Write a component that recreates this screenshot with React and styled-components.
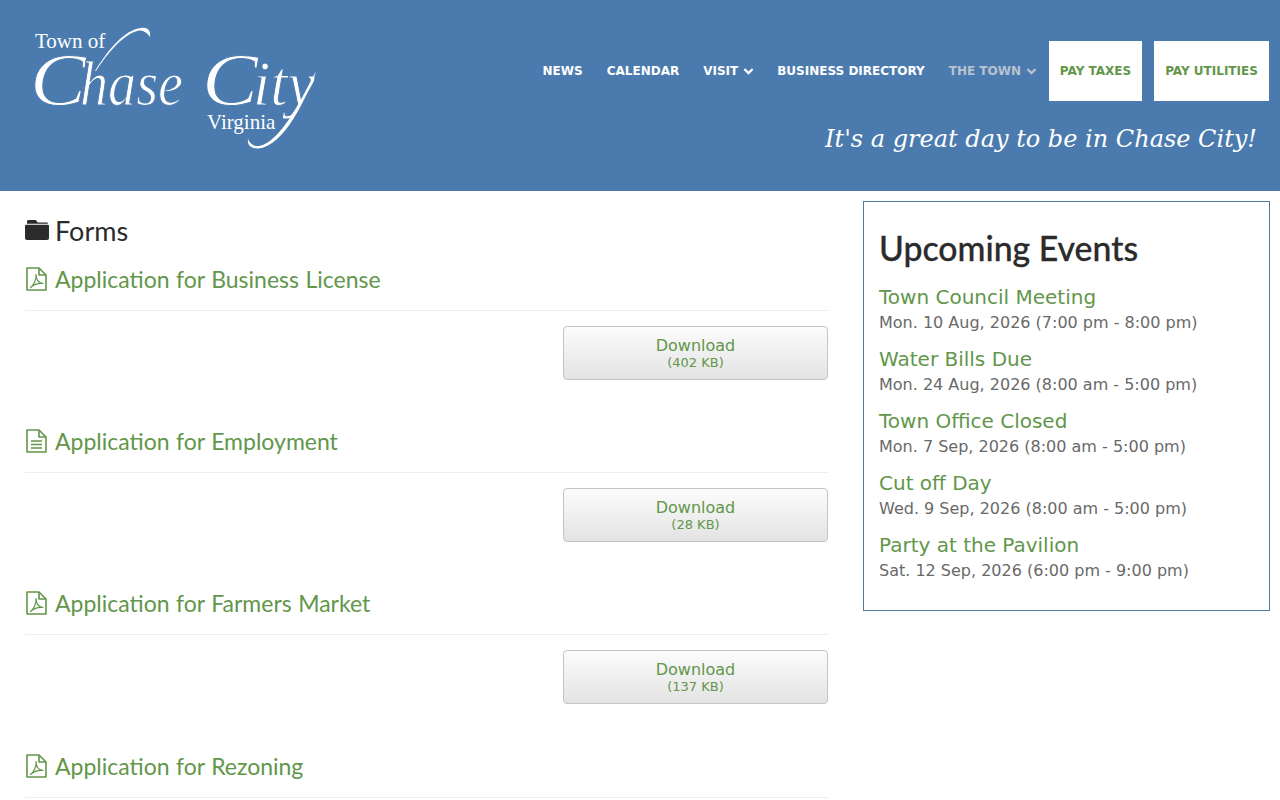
import React from "react";
import styled, { createGlobalStyle } from "styled-components";
import { FaAngleDown } from "react-icons/fa";

const GlobalStyle = createGlobalStyle`
  html, body {
    margin: 0;
    padding: 0;
    background: #fff;
    font-family: "DejaVu Sans", sans-serif;
    color: #666;
  }
  * { box-sizing: border-box; }
`;

const Header = styled.header`
  display: flex;
  justify-content: space-between;
  height: 191px;
  background: #4b7bae;
`;

const LogoLink = styled.a`
  display: block;
  width: 340px;
  height: 190px;
`;

const HeaderRight = styled.div`
  display: flex;
  flex-direction: column;
  align-items: flex-end;
  padding: 41px 11px 0 0;
`;

const Nav = styled.nav`
  display: flex;
  align-items: center;
  height: 60px;
`;

const NavLink = styled.a`
  display: flex;
  align-items: center;
  gap: 3px;
  padding: 0 12px;
  font-size: 12px;
  font-weight: 700;
  text-transform: uppercase;
  color: ${(p) => (p.$active ? "#b9c3ce" : "#fff")};
  svg { font-size: 15px; margin-right: -3px; }
`;

const PayButton = styled.a`
  display: flex;
  align-items: center;
  justify-content: center;
  width: ${(p) => p.$width}px;
  height: 60px;
  margin-left: ${(p) => p.$gap}px;
  background: #fff;
  font-size: 12px;
  font-weight: 700;
  color: #62964a;
`;

const Tagline = styled.div`
  margin: 22px 12px 0 0;
  font-family: "DejaVu Serif", serif;
  font-style: italic;
  font-size: 24px;
  line-height: 32px;
  color: #fff;
`;

const Main = styled.main`
  display: flex;
  justify-content: space-between;
  padding: 10px 10px 0 25px;
`;

const FormsColumn = styled.section`
  width: 803px;
`;

const PageTitle = styled.h1`
  display: flex;
  align-items: center;
  gap: 6px;
  margin: 14px 0 0;
  height: 30px;
  font-family: "Lato", sans-serif;
  font-weight: 400;
  font-size: 27px;
  color: #2b2b2b;
`;

const FormTitle = styled.h2`
  display: flex;
  align-items: center;
  gap: 8px;
  height: 66px;
  margin: 0;
  padding: 3px 0 0 1px;
  border-bottom: 1px solid #eee;
  font-family: "Lato", sans-serif;
  font-weight: 400;
  font-size: 23px;
  word-spacing: 0.6px;
  color: #62964a;
`;

const DownloadRow = styled.div`
  display: flex;
  justify-content: flex-end;
  height: 96.2px;
  padding-top: 15px;
`;

const DownloadButton = styled.a`
  display: flex;
  flex-direction: column;
  align-items: center;
  justify-content: center;
  width: 265px;
  height: 54px;
  padding-top: 2px;
  border: 1px solid #c4c4c4;
  border-radius: 4px;
  background: linear-gradient(#fcfcfc, #e3e3e3);
  font-size: 16px;
  line-height: 18px;
  color: #62964a;
  small { font-size: 13px; line-height: 16px; }
`;

const EventsPanel = styled.aside`
  width: 407px;
  height: 410px;
  padding: 27px 15px 0;
  border: 1px solid #4f7b9f;
`;

const EventsTitle = styled.h2`
  margin: 0 0 16px;
  font-family: "Lato", sans-serif;
  font-weight: 500;
  font-size: 33.8px;
  line-height: 38px;
  -webkit-text-stroke: 0.3px #2b2b2b;
  color: #2b2b2b;
`;

const EventItem = styled.div`
  height: 62px;
`;

const EventName = styled.a`
  display: block;
  font-size: 20px;
  line-height: 28px;
  color: #62964a;
`;

const EventTime = styled.div`
  font-size: 16px;
  line-height: 23px;
  color: #696969;
`;

const FolderIcon = () => (
  <svg width="24" height="22" viewBox="0 0 24 22" fill="#2b2b2b">
    <path d="M2 2.5C2 1.6 2.6 1 3.5 1H10C11 1 11.5 1.6 12 2.5L12.6 3.5H21.5C22.3 3.5 23 4 23 4.8H2Z" />
    <path d="M0 7C0 6.2 .6 5.8 1.4 5.8H22.6C23.4 5.8 24 6.2 24 7V19C24 20.2 23.2 21 22 21H2C.8 21 0 20.2 0 19Z" />
  </svg>
);

const FileOutline = ({ children }) => (
  <svg width="21" height="24" viewBox="0 0 21 24" fill="none" stroke="#62964a" strokeWidth="1.6" strokeLinejoin="round">
    <path d="M1 1H13L20 8V23H1Z" />
    <path d="M13 1V8H20" />
    {children}
  </svg>
);

const PdfIcon = () => (
  <FileOutline>
    <path strokeWidth="1.2" d="M4.5 20.5C8 18 10.5 12 10 7.5C10 13 13 16 17 16.5C13 16 8.5 17 4.5 20.5Z" />
  </FileOutline>
);

const TextIcon = () => (
  <FileOutline>
    <path strokeWidth="1.4" d="M5 12H16M5 15.5H16M5 19H16" />
  </FileOutline>
);

const forms = [
  { title: "Application for Business License", size: "402 KB", Icon: PdfIcon },
  { title: "Application for Employment", size: "28 KB", Icon: TextIcon },
  { title: "Application for Farmers Market", size: "137 KB", Icon: PdfIcon },
  { title: "Application for Rezoning", size: "", Icon: PdfIcon },
];

const events = [
  ["Town Council Meeting", "Mon. 10 Aug, 2026 (7:00 pm - 8:00 pm)"],
  ["Water Bills Due", "Mon. 24 Aug, 2026 (8:00 am - 5:00 pm)"],
  ["Town Office Closed", "Mon. 7 Sep, 2026 (8:00 am - 5:00 pm)"],
  ["Cut off Day", "Wed. 9 Sep, 2026 (8:00 am - 5:00 pm)"],
  ["Party at the Pavilion", "Sat. 12 Sep, 2026 (6:00 pm - 9:00 pm)"],
];

// script lettering: real italic text thinned with a stroke in the header colour
const Logo = () => (
  <svg width="340" height="190" viewBox="0 0 340 190" fill="#fff">
    <text x="35" y="47.5" fontFamily="Liberation Serif" fontSize="21">Town of</text>
    <g fontFamily="Liberation Serif" fontStyle="italic" stroke="#4b7bae" strokeWidth="1">
      <text x="30" y="105" fontSize="74" textLength="56" lengthAdjust="spacingAndGlyphs">C</text>
      <text x="80" y="105" fontSize="64" textLength="103" lengthAdjust="spacingAndGlyphs">hase</text>
      <text x="202" y="105" fontSize="74" textLength="56" lengthAdjust="spacingAndGlyphs">C</text>
      <text x="253" y="105" fontSize="64" textLength="62" lengthAdjust="spacingAndGlyphs">ity</text>
    </g>
    <text x="207" y="129" fontFamily="Liberation Serif" fontSize="21">Virginia</text>
    <path d="M95 71C108 50 124 30 141 28C147 27 151 30 150 37C147 32 143 30.5 139 30.5C125 33 108 52 96 71Z" />
    <path d="M316 72C306 98 284 147 258 148.5C252 148.5 247 146 248 139C250 144 254 146.5 259 146C280 143 302 98 314.5 74Z" />
  </svg>
);

export default function App() {
  return (
    <>
      <GlobalStyle />
      <Header>
        <LogoLink>
          <Logo />
        </LogoLink>
        <HeaderRight>
          <Nav>
            <NavLink>News</NavLink>
            <NavLink>Calendar</NavLink>
            <NavLink>Visit <FaAngleDown /></NavLink>
            <NavLink>Business Directory</NavLink>
            <NavLink $active>The Town <FaAngleDown /></NavLink>
            <PayButton $width={93} $gap={1}>PAY TAXES</PayButton>
            <PayButton $width={115} $gap={12}>PAY UTILITIES</PayButton>
          </Nav>
          <Tagline>It's a great day to be in Chase City!</Tagline>
        </HeaderRight>
      </Header>
      <Main>
        <FormsColumn>
          <PageTitle><FolderIcon /> Forms</PageTitle>
          {forms.map(({ title, size, Icon }) => (
            <article key={title}>
              <FormTitle><Icon /> {title}</FormTitle>
              {size && (
                <DownloadRow>
                  <DownloadButton>
                    Download
                    <small>({size})</small>
                  </DownloadButton>
                </DownloadRow>
              )}
            </article>
          ))}
        </FormsColumn>
        <EventsPanel>
          <EventsTitle>Upcoming Events</EventsTitle>
          {events.map(([name, time]) => (
            <EventItem key={name}>
              <EventName>{name}</EventName>
              <EventTime>{time}</EventTime>
            </EventItem>
          ))}
        </EventsPanel>
      </Main>
    </>
  );
}
